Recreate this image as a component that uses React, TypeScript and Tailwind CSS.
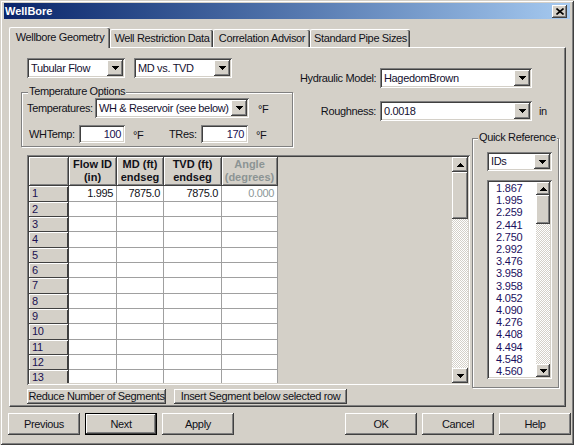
import React from "react";

const SUNKEN_W =
  "bg-white shadow-[inset_1px_1px_0_#808080,inset_-1px_-1px_0_#ffffff,inset_2px_2px_0_#404040,inset_-2px_-2px_0_#d4d0c8]";
const SUNKEN_G =
  "bg-[#d4d0c8] shadow-[inset_1px_1px_0_#808080,inset_-1px_-1px_0_#ffffff,inset_2px_2px_0_#404040,inset_-2px_-2px_0_#d4d0c8]";
const RAISED =
  "bg-[#d4d0c8] shadow-[inset_-1px_-1px_0_#404040,inset_1px_1px_0_#ffffff,inset_-2px_-2px_0_#808080,inset_2px_2px_0_#d4d0c8]";
const ETCHED = "border border-[#808080] shadow-[inset_1px_1px_0_#ffffff,1px_1px_0_#ffffff]";
const TRACK =
  "bg-[image:repeating-conic-gradient(#d4d0c8_0%_25%,#ffffff_0%_50%)] bg-[length:2px_2px]";

const Down = () => (
  <svg width="7" height="4" viewBox="0 0 7 4" shapeRendering="crispEdges">
    <path d="M0 0H7V1H6V2H5V3H4V4H3V3H2V2H1V1H0Z" fill="#000" />
  </svg>
);
const Up = () => (
  <svg width="7" height="4" viewBox="0 0 7 4" shapeRendering="crispEdges">
    <path d="M3 0H4V1H5V2H6V3H7V4H0V3H1V2H2V1H3Z" fill="#000" />
  </svg>
);

function Combo({ cls, text }: { cls: string; text: string }) {
  return (
    <div className={`${SUNKEN_W} ${cls} flex p-[2px] shrink-0`}>
      <div className="flex-1 flex items-center pl-[2px] overflow-hidden whitespace-nowrap text-[#141030]">
        {text}
      </div>
      <div className={`${RAISED} w-[16px] h-full flex items-center justify-center shrink-0`}>
        <Down />
      </div>
    </div>
  );
}

function Field({ cls, text }: { cls: string; text: string }) {
  return (
    <div className={`${SUNKEN_W} ${cls} flex items-center justify-end pr-[4px] shrink-0 text-[#201050]`}>
      {text}
    </div>
  );
}

function Btn({ cls, text }: { cls: string; text: string }) {
  return (
    <div className={`${RAISED} ${cls} flex items-center justify-center whitespace-nowrap shrink-0`}>
      {text}
    </div>
  );
}

const ids = [
  "1.867", "1.995", "2.259", "2.441", "2.750", "2.992", "3.476", "3.958",
  "3.958", "4.052", "4.090", "4.276", "4.408", "4.494", "4.548", "4.560",
];

const HDR =
  "bg-[#d4d0c8] border-r border-b border-[#404040] shadow-[inset_1px_1px_0_#ffffff,inset_-1px_-1px_0_#808080] flex flex-col items-center justify-center font-bold leading-[13px] tracking-[0px] shrink-0";
const ROWHDR =
  "w-[40px] bg-[#d4d0c8] border-r border-b border-[#404040] shadow-[inset_1px_1px_0_#ffffff,inset_-1px_0_0_#404040] pl-[3px] flex items-center text-[#201050] shrink-0";
const CELL = "bg-white border-r border-b border-[#a0a0a0] flex items-center justify-end pr-[3px] shrink-0";

function Grid() {
  const rows = Array.from({ length: 13 }, (_, i) => i + 1);
  return (
    <div className={`${SUNKEN_G} mt-[7px] w-[443px] h-[230px] p-[2px] flex`}>
      <div className="w-[249px] h-full flex flex-col overflow-hidden shrink-0">
        <div className="flex h-[29px] shrink-0">
          <div className={`${HDR} w-[40px]`} />
          <div className={`${HDR} w-[48px]`}>
            <span>Flow ID</span>
            <span>(in)</span>
          </div>
          <div className={`${HDR} w-[47px]`}>
            <span>MD (ft)</span>
            <span>endseg</span>
          </div>
          <div className={`${HDR} w-[58px]`}>
            <span>TVD (ft)</span>
            <span>endseg</span>
          </div>
          <div className={`${HDR} w-[56px] text-[#8c9494]`}>
            <span>Angle</span>
            <span>(degrees)</span>
          </div>
        </div>
        {rows.map((r) => (
          <div key={r} className={`flex shrink-0 ${r % 3 === 1 ? "h-[16px]" : "h-[15px]"}`}>
            <div className={ROWHDR}>{r}</div>
            <div className={`${CELL} w-[48px]`}>{r === 1 ? "1.995" : ""}</div>
            <div className={`${CELL} w-[47px]`}>{r === 1 ? "7875.0" : ""}</div>
            <div className={`${CELL} w-[58px]`}>{r === 1 ? "7875.0" : ""}</div>
            <div className={`${CELL} w-[56px] text-[#8c9898]`}>{r === 1 ? "0.000" : ""}</div>
          </div>
        ))}
      </div>
      <div className="flex-1" />
      <div className="w-[16px] h-full flex flex-col shrink-0">
        <div className={`${RAISED} h-[15px] flex items-center justify-center shrink-0`}>
          <Up />
        </div>
        <div className={`${RAISED} h-[47px] shrink-0`} />
        <div className={`flex-1 ${TRACK}`} />
        <div className={`${RAISED} h-[15px] flex items-center justify-center shrink-0`}>
          <Down />
        </div>
      </div>
    </div>
  );
}

function QuickRef() {
  return (
    <div className={`${ETCHED} relative ml-[2px] -mt-[10px] w-[87px] h-[250px] flex flex-col shrink-0`}>
      <span className="absolute left-[5px] -top-[8px] px-[1px] bg-[#d4d0c8] whitespace-nowrap">
        Quick Reference
      </span>
      <Combo cls="ml-[14px] mt-[13px] w-[65px] h-[19px]" text="IDs" />
      <div className={`${SUNKEN_W} ml-[14px] mt-[9px] w-[65px] h-[199px] p-[2px] flex`}>
        <div className="flex-1 overflow-hidden pl-[7px] flex flex-col text-[#1c1060] tracking-[-0.2px]">
          {ids.map((v, i) => (
            <div
              key={i}
              className={`shrink-0 ${i % 5 === 2 ? "h-[13px] leading-[13px]" : "h-[12px] leading-[12px]"}`}
            >
              {v}
            </div>
          ))}
        </div>
        <div className="w-[14px] h-full flex flex-col shrink-0">
          <div className={`${RAISED} h-[13px] flex items-center justify-center shrink-0`}>
            <Up />
          </div>
          <div className={`${RAISED} h-[29px] shrink-0`} />
          <div className={`flex-1 ${TRACK}`} />
          <div className={`${RAISED} h-[13px] flex items-center justify-center shrink-0`}>
            <Down />
          </div>
        </div>
      </div>
    </div>
  );
}

const TAB =
  "bg-[#d4d0c8] rounded-t-[2px] border-t border-l border-white shadow-[inset_-1px_0_0_#404040,inset_-2px_0_0_#808080] flex items-center justify-center whitespace-nowrap shrink-0";

export default function App() {
  return (
    <div className="w-[574px] h-[445px] overflow-hidden bg-[#d4d0c8] pt-[3px] px-[4px] font-['Liberation_Sans',Arial,sans-serif] text-[11px] leading-[13px] tracking-[-0.35px] text-[#111118] shadow-[inset_1px_1px_0_#d4d0c8,inset_-1px_-1px_0_#404040,inset_2px_2px_0_#ffffff,inset_-2px_-2px_0_#808080]">
      {/* Title bar */}
      <div className="h-[16px] bg-linear-to-r from-[#0a246a] to-[#a6caf0] flex items-center">
        <span className="pl-[1px] font-bold text-white tracking-[0px]">WellBore</span>
        <div className="flex-1" />
        <div className={`${RAISED} w-[15px] h-[13px] mr-[3px] flex items-center justify-center`}>
          <svg width="8" height="7" viewBox="0 0 8 7">
            <path d="M0.5 0.5L7.5 6.5M7.5 0.5L0.5 6.5" stroke="#000" strokeWidth="1.6" />
          </svg>
        </div>
      </div>

      {/* Tabs */}
      <div className="mt-[8px] ml-[5px] h-[20px] flex items-end">
        <div className={`${TAB} relative z-10 w-[101px] h-[21px] -mb-[1px] pb-[1px]`}>Wellbore Geometry</div>
        <div className={`${TAB} w-[103px] h-[18px]`}>Well Restriction Data</div>
        <div className={`${TAB} w-[97px] h-[18px]`}>Correlation Advisor</div>
        <div className={`${TAB} w-[100px] h-[18px]`}>Standard Pipe Sizes</div>
      </div>

      {/* Panel */}
      <div className="ml-[5px] w-[557px] h-[360px] border border-t-white border-l-white border-r-[#404040] border-b-[#404040] shadow-[inset_-1px_-1px_0_#808080] flex flex-col">
        <div className="flex h-[100px] shrink-0">
          <div className="ml-[11px] w-[272px] flex flex-col shrink-0">
            <div className="mt-[10px] ml-[6px] flex gap-[9px]">
              <Combo cls="w-[98px] h-[20px]" text="Tubular Flow" />
              <Combo cls="w-[98px] h-[20px]" text="MD vs. TVD" />
            </div>
            <div className={`${ETCHED} relative mt-[14px] h-[55px] w-[272px] flex flex-col`}>
              <span className="absolute left-[6px] -top-[8px] px-[1px] bg-[#d4d0c8] whitespace-nowrap">
                Temperature Options
              </span>
              <div className="mt-[5px] ml-[5px] flex items-center">
                <span className="w-[68px] shrink-0 whitespace-nowrap">Temperatures:</span>
                <Combo cls="w-[154px] h-[20px]" text="WH & Reservoir (see below)" />
                <span className="ml-[9px] mt-[2px]">°F</span>
              </div>
              <div className="mt-[7px] ml-[7px] flex items-center">
                <span className="w-[50px] shrink-0">WHTemp:</span>
                <Field cls="w-[46px] h-[18px]" text="100" />
                <span className="w-[44px] pl-[8px] mt-[3px] shrink-0">°F</span>
                <span className="w-[32px] shrink-0">TRes:</span>
                <Field cls="w-[47px] h-[18px]" text="170" />
                <span className="pl-[8px] mt-[3px]">°F</span>
              </div>
            </div>
          </div>
          <div className="ml-[7px] flex flex-col">
            <div className="mt-[20px] flex items-center">
              <span className="w-[80px] pr-[4px] text-right whitespace-nowrap shrink-0">Hydraulic Model:</span>
              <Combo cls="w-[152px] h-[20px]" text="HagedomBrown" />
            </div>
            <div className="mt-[13px] flex items-center">
              <span className="w-[80px] pr-[4px] text-right whitespace-nowrap shrink-0">Roughness:</span>
              <Combo cls="w-[152px] h-[20px]" text="0.0018" />
              <span className="ml-[7px]">in</span>
            </div>
          </div>
        </div>

        <div className="flex">
          <div className="ml-[17px] flex flex-col shrink-0">
            <Grid />
            <div className="mt-[4px] flex gap-[8px]">
              <Btn cls="w-[139px] h-[15px]" text="Reduce Number of Segments" />
              <Btn cls="w-[173px] h-[15px]" text="Insert Segment below selected row" />
            </div>
          </div>
          <QuickRef />
        </div>
      </div>

      {/* Bottom buttons */}
      <div className="mt-[6px] ml-[4px] flex gap-[5px]">
        <Btn cls="w-[72px] h-[22px]" text="Previous" />
        <Btn cls="w-[72px] h-[22px] border border-black" text="Next" />
        <Btn cls="w-[72px] h-[22px]" text="Apply" />
        <div className="w-[101px] shrink-0" />
        <Btn cls="w-[72px] h-[22px]" text="OK" />
        <Btn cls="w-[72px] h-[22px]" text="Cancel" />
        <Btn cls="w-[72px] h-[22px]" text="Help" />
      </div>
    </div>
  );
}
